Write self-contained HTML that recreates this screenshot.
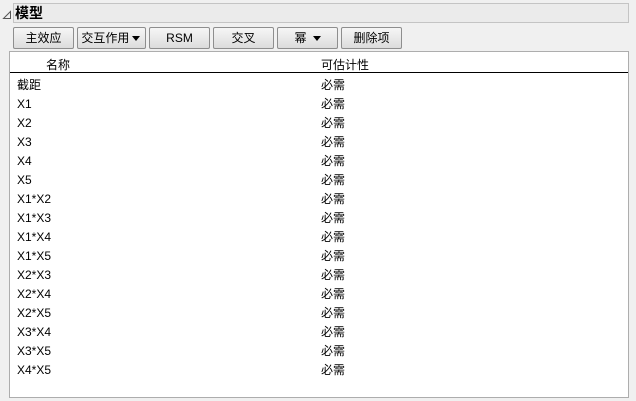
<!DOCTYPE html>
<html><head><style>
body{margin:0;width:636px;height:401px;background:#f0f0f0;font-family:"Liberation Sans","Noto Sans CJK SC",sans-serif;font-size:12px;color:#000;position:relative;overflow:hidden}
.t{position:absolute;left:13px;top:3px;width:614px;height:18px;background:#ebebeb;border:1px solid #c4c4c4}
.tt{position:absolute;left:15px;top:3px;font-weight:bold;font-size:14px;line-height:20px}
.tri{position:absolute;left:2px;top:10px}
.b{position:absolute;top:27px;height:20px;border:1px solid #8e8e8e;border-radius:2px;background:linear-gradient(#f6f6f6,#dcdcdc);text-align:center;line-height:20px;font-size:12px;box-sizing:content-box}
.ar{display:inline-block;width:0;height:0;border-left:4px solid transparent;border-right:4px solid transparent;border-top:5px solid #000;vertical-align:middle;margin-left:3px}
.box{position:absolute;left:9px;top:51px;width:618px;height:345px;background:#fff;border:1px solid #adadad}
.hl{position:absolute;left:0;right:0;top:20px;border-top:1px solid #000}
.r{position:absolute;line-height:14px;white-space:nowrap}
</style></head><body>
<div class="t"></div>
<svg class="tri" width="10" height="10"><path d="M8.5 1.5 L8.5 8.5 L1.5 8.5 Z" fill="none" stroke="#555"/></svg>
<div class="tt">模型</div>
<div class="b" style="left:13px;width:59px">主效应</div>
<div class="b" style="left:77px;width:67px;text-align:left">&nbsp;交互作用<span class="ar"></span></div>
<div class="b" style="left:149px;width:59px">RSM</div>
<div class="b" style="left:213px;width:59px">交叉</div>
<div class="b" style="left:277px;width:59px">幂<span class="ar" style="margin-left:6px"></span></div>
<div class="b" style="left:341px;width:59px">删除项</div>
<div class="box">
<div class="hl"></div>
<div class="r" style="left:36px;top:6px">名称</div>
<div class="r" style="left:311px;top:6px">可估计性</div>
</div>
<div id="rows"></div>
<script>
var n=["截距","X1","X2","X3","X4","X5","X1*X2","X1*X3","X1*X4","X1*X5","X2*X3","X2*X4","X2*X5","X3*X4","X3*X5","X4*X5"],h="";
for(var i=0;i<n.length;i++){var y=78+i*19;h+='<div class="r" style="left:17px;top:'+y+'px">'+n[i]+'</div><div class="r" style="left:321px;top:'+y+'px">必需</div>';}
document.getElementById("rows").innerHTML=h;
</script>
</body></html>
